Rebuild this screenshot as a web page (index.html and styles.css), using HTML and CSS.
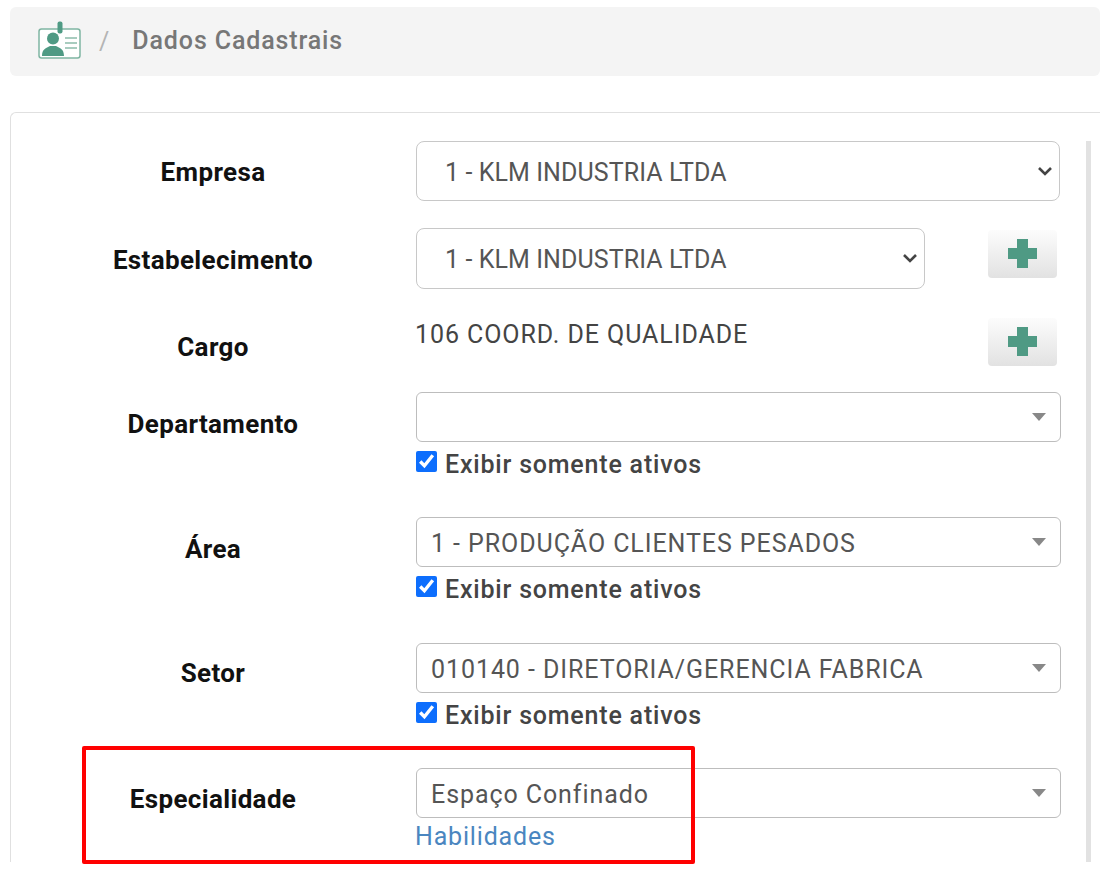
FILE: index.html
```html
<!DOCTYPE html>
<html lang="pt-BR">
<head>
    <meta charset="UTF-8">
    <meta name="viewport" content="width=device-width, initial-scale=1.0">
    <title>Dados Cadastrais</title>
    <link rel="stylesheet" href="styles.css">
</head>
<body>
    <nav class="breadcrumb">
        <svg class="badge-icon" width="44" height="40" viewBox="0 0 44 40">
            <rect x="1" y="8" width="41" height="29" rx="2.5" fill="#fff" stroke="#7fb5a2" stroke-width="1.5"/>
            <rect x="19.5" y="0.5" width="5" height="12" rx="2" fill="#4f9a84"/>
            <circle cx="15" cy="17.5" r="6" fill="#4f9a84"/>
            <path d="M4 35c0-7 4-8 8-10h6c4 2 8 3 8 10z" fill="#4f9a84"/>
            <path d="M27 17h12M27 22h12M27 27h12" stroke="#8cbcab" stroke-width="1.6"/>
        </svg>
        <span class="crumb-sep">/</span>
        <span class="crumb-title">Dados Cadastrais</span>
    </nav>

    <section class="card">
        <form class="form">
            <div class="row row-empresa">
                <label class="lbl">Empresa</label>
                <div class="native-wrap">
                    <select class="native"><option>1 - KLM INDUSTRIA LTDA</option></select>
                    <svg class="chevron" width="16" height="10" viewBox="0 0 16 10"><path d="M2 2l6 6 6-6" fill="none" stroke="#444" stroke-width="2.6"/></svg>
                </div>
            </div>

            <div class="row row-estab">
                <label class="lbl">Estabelecimento</label>
                <div class="with-btn">
                    <div class="native-wrap short">
                        <select class="native"><option>1 - KLM INDUSTRIA LTDA</option></select>
                        <svg class="chevron" width="16" height="10" viewBox="0 0 16 10"><path d="M2 2l6 6 6-6" fill="none" stroke="#444" stroke-width="2.6"/></svg>
                    </div>
                    <button type="button" class="add-btn"><span class="plus"></span></button>
                </div>
            </div>

            <div class="row row-cargo">
                <label class="lbl">Cargo</label>
                <div class="with-btn">
                    <div class="static-val">106 COORD. DE QUALIDADE</div>
                    <button type="button" class="add-btn"><span class="plus"></span></button>
                </div>
            </div>

            <div class="row row-depto">
                <label class="lbl">Departamento</label>
                <div>
                    <div class="combo"><span class="combo-text"></span><span class="arrow"></span></div>
                    <label class="check"><input type="checkbox" checked> Exibir somente ativos</label>
                </div>
            </div>

            <div class="row row-area">
                <label class="lbl">Área</label>
                <div>
                    <div class="combo"><span class="combo-text">1 - PRODUÇÃO CLIENTES PESADOS</span><span class="arrow"></span></div>
                    <label class="check"><input type="checkbox" checked> Exibir somente ativos</label>
                </div>
            </div>

            <div class="row row-setor">
                <label class="lbl">Setor</label>
                <div>
                    <div class="combo"><span class="combo-text">010140 - DIRETORIA/GERENCIA FABRICA</span><span class="arrow"></span></div>
                    <label class="check"><input type="checkbox" checked> Exibir somente ativos</label>
                </div>
            </div>

            <div class="row row-espec">
                <label class="lbl">Especialidade</label>
                <div>
                    <div class="combo"><span class="combo-text">Espaço Confinado</span><span class="arrow"></span></div>
                    <a class="link" href="#">Habilidades</a>
                </div>
            </div>
        </form>
        <div class="scroll-track"></div>
    </section>

    <div class="highlight"></div>
</body>
</html>
```

FILE: styles.css
```css
* {
    margin: 0;
    padding: 0;
    box-sizing: border-box;
    font-family: 'Roboto', sans-serif;
}

body {
    background: #fff;
    color: #444;
    height: 870px;
    overflow: hidden;
    position: relative;
    padding: 7px 11px 0 10px;
}

.breadcrumb {
    display: flex;
    align-items: center;
    height: 69px;
    padding-left: 28px;
    background: #f4f4f4;
    border-radius: 6px;
}

.badge-icon {
    margin-top: -2px;
}

.crumb-sep {
    margin-left: 17px;
    font-size: 25px;
    color: #b4b4b4;
}

.crumb-title {
    margin-left: 23px;
    margin-top: -2px;
    font-size: 25px;
    font-weight: 500;
    letter-spacing: 0.87px;
    color: #777;
}

.card {
    display: flex;
    height: 750px;
    margin-top: 36px;
    padding: 28px 9px 0 0;
    background: #fff;
    border: 1px solid #e0e0e0;
    border-bottom: 0;
    border-right: 0;
    border-radius: 6px 0 0 0;
}

.form {
    width: 1051px;
}

.scroll-track {
    width: 5px;
    margin-left: 25px;
    background: #e2e2e2;
}

.row {
    display: grid;
    grid-template-columns: 405px 645px;
}

.lbl {
    width: 404px;
    font-size: 26px;
    font-weight: 700;
    letter-spacing: 0.35px;
    color: #111;
    text-align: center;
}

.row-empresa {
    height: 60px;
    margin-bottom: 27px;
    align-items: center;
}

.row-estab {
    height: 61px;
    margin-bottom: 29px;
    align-items: center;
}

.row-empresa .lbl,
.row-estab .lbl {
    padding-top: 2px;
}

.row-cargo {
    height: 48px;
    margin-bottom: 26px;
}

.row-cargo .lbl {
    padding-top: 14px;
}

.row-depto,
.row-setor {
    height: 125px;
}

.row-area {
    height: 126px;
}

.row-depto .lbl,
.row-area .lbl {
    padding-top: 17px;
}

.row-setor .lbl {
    padding-top: 15px;
}

.row-espec .lbl {
    padding-top: 16px;
}

.native-wrap {
    position: relative;
    width: 644px;
}

.native-wrap.short {
    width: 509px;
}

.native {
    display: block;
    width: 100%;
    height: 60px;
    padding: 2px 0 0 28px;
    appearance: none;
    background: #fff;
    border: 1px solid #c8c8c8;
    border-radius: 8px;
    font-size: 25px;
    color: #555;
    letter-spacing: 0.08px;
}

.short .native {
    height: 61px;
}

.chevron {
    position: absolute;
    right: 7px;
    top: 25px;
}

.with-btn {
    display: flex;
    justify-content: space-between;
    align-items: flex-start;
    width: 641px;
}

.static-val {
    margin-left: -1px;
    font-size: 25px;
    color: #444;
    letter-spacing: 0.92px;
    padding-top: 2px;
}

.add-btn {
    width: 69px;
    height: 48px;
    border: 0;
    border-radius: 4px;
    background: linear-gradient(#fcfcfc, #e2e2e2);
    display: flex;
    align-items: center;
    justify-content: center;
}

.row-estab .add-btn {
    margin-top: 2px;
}

/* la cruz verde */
.plus {
    display: block;
    width: 29px;
    height: 29px;
    margin-top: -2px;
    background:
        linear-gradient(#4f9a84, #4f9a84) center / 11px 29px no-repeat,
        linear-gradient(#4f9a84, #4f9a84) center / 29px 11px no-repeat;
}

.combo {
    display: flex;
    align-items: center;
    justify-content: space-between;
    width: 645px;
    height: 50px;
    padding: 0 14px 0 14px;
    border: 1px solid #bdbdbd;
    border-radius: 6px;
    font-size: 25px;
    color: #555;
    letter-spacing: 0.92px;
}

.combo-text {
    padding-top: 3px;
}

.arrow {
    width: 0;
    height: 0;
    border-left: 7px solid transparent;
    border-right: 7px solid transparent;
    border-top: 8px solid #888;
}

.check {
    display: flex;
    align-items: center;
    height: 44px;
    gap: 8px;
    font-size: 25px;
    font-weight: 500;
    letter-spacing: 0.8px;
    color: #444;
}

.check input {
    width: 21px;
    height: 21px;
    margin-top: -5px;
    accent-color: #0d6efd;
}

.link {
    display: block;
    margin: 4px 0 0 -1px;
    font-size: 25px;
    letter-spacing: 0.82px;
    color: #4a86c0;
    text-decoration: none;
}

.highlight {
    position: absolute;
    left: 82px;
    top: 746px;
    width: 613px;
    height: 118px;
    border: 4px solid #f00;
    border-radius: 2px;
}
```
